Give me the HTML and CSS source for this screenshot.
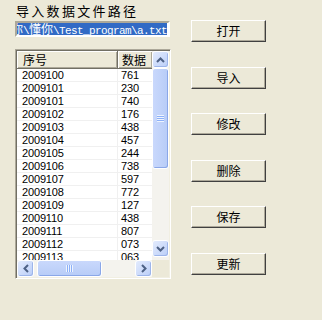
FILE: index.html
```html
<!DOCTYPE html>
<html lang="zh-CN">
<head>
    <meta charset="UTF-8">
    <title>导入数据</title>
    <link rel="stylesheet" href="styles.css">
</head>
<body>
    <div class="window">
        <div class="left">
            <div class="label">导入数据文件路径</div>
            <div class="path">
                <span class="sel">D:\<span class="cjk">我爱你</span>\<span class="cjk">懂你</span>\Test_program\a.txt</span>
            </div>
            <div class="list">
                <div class="list-main">
                    <div class="list-body">
                        <div class="head"><div class="c1">序号</div><div class="c2">数据</div></div>
                        <div class="row"><div class="c1">2009100</div><div class="c2">761</div></div>
                        <div class="row"><div class="c1">2009101</div><div class="c2">230</div></div>
                        <div class="row"><div class="c1">2009101</div><div class="c2">740</div></div>
                        <div class="row"><div class="c1">2009102</div><div class="c2">176</div></div>
                        <div class="row"><div class="c1">2009103</div><div class="c2">438</div></div>
                        <div class="row"><div class="c1">2009104</div><div class="c2">457</div></div>
                        <div class="row"><div class="c1">2009105</div><div class="c2">244</div></div>
                        <div class="row"><div class="c1">2009106</div><div class="c2">738</div></div>
                        <div class="row"><div class="c1">2009107</div><div class="c2">597</div></div>
                        <div class="row"><div class="c1">2009108</div><div class="c2">772</div></div>
                        <div class="row"><div class="c1">2009109</div><div class="c2">127</div></div>
                        <div class="row"><div class="c1">2009110</div><div class="c2">438</div></div>
                        <div class="row"><div class="c1">2009111</div><div class="c2">807</div></div>
                        <div class="row"><div class="c1">2009112</div><div class="c2">073</div></div>
                        <div class="row"><div class="c1">2009113</div><div class="c2">063</div></div>
                    </div>
                    <div class="vscroll">
                        <div class="sb-btn">
                            <svg width="9" height="6" viewBox="0 0 9 6"><path d="M1 5 L4.5 1.5 L8 5" fill="none" stroke="#4d6185" stroke-width="2"/></svg>
                        </div>
                        <div class="thumb v-thumb"><div class="grip v-grip"></div></div>
                        <div class="track"></div>
                        <div class="sb-btn">
                            <svg width="9" height="6" viewBox="0 0 9 6"><path d="M1 1 L4.5 4.5 L8 1" fill="none" stroke="#4d6185" stroke-width="2"/></svg>
                        </div>
                        <div class="v-end"></div>
                    </div>
                </div>
                <div class="list-foot">
                    <div class="hscroll">
                        <div class="sb-btn">
                            <svg width="6" height="9" viewBox="0 0 6 9"><path d="M5 1 L1.5 4.5 L5 8" fill="none" stroke="#4d6185" stroke-width="2"/></svg>
                        </div>
                        <div class="track h-gap"></div>
                        <div class="thumb h-thumb"><div class="grip h-grip"></div></div>
                        <div class="track"></div>
                        <div class="sb-btn">
                            <svg width="6" height="9" viewBox="0 0 6 9"><path d="M1 1 L4.5 4.5 L1 8" fill="none" stroke="#4d6185" stroke-width="2"/></svg>
                        </div>
                    </div>
                    <div class="corner"></div>
                </div>
            </div>
        </div>

        <div class="buttons">
            <button class="btn">打开</button>
            <button class="btn">导入</button>
            <button class="btn">修改</button>
            <button class="btn">删除</button>
            <button class="btn">保存</button>
            <button class="btn">更新</button>
        </div>
    </div>
</body>
</html>
```

FILE: styles.css
```css
body {
    margin: 0;
    background: #ece9d8;
    font-family: "Noto Sans CJK SC", sans-serif;
    color: #000;
}

.window {
    display: flex;
    width: 322px;
    height: 320px;
    padding-left: 15px;
    box-sizing: border-box;
}

.left {
    width: 156px;
    padding-top: 2px;
}

.label {
    height: 17px;
    line-height: 17px;
    font-size: 13px;
    letter-spacing: 2.3px;
    margin-left: 1px;
    white-space: nowrap;
}

/* sunken edit box */
.path {
    margin-top: 2px;
    width: 155px;
    height: 16px;
    box-sizing: border-box;
    border: 2px solid;
    border-color: #aca899 #fff #fff #aca899;
    background: #fff;
    display: flex;
    justify-content: flex-end;
    overflow: hidden;
    padding-right: 1px;
}

.sel {
    flex-shrink: 0;
    background: #316ac5;
    color: #fff;
    height: 12px;
    line-height: 12px;
    font-family: "Liberation Mono", monospace;
    font-size: 11px;
    letter-spacing: -0.6px;
    white-space: nowrap;
}

.cjk {
    font-family: "Noto Sans CJK SC", sans-serif;
    font-size: 12px;
    letter-spacing: 0;
}

.list {
    margin-top: 12px;
    width: 156px;
    height: 230px;
    box-sizing: border-box;
    border: 1px solid;
    border-color: #aca899 #fff #fff #aca899;
    box-shadow: inset 1px 1px 0 #716f64, inset -1px -1px 0 #f1efe2;
    padding: 1px;
    display: flex;
    flex-direction: column;
}

.list-main {
    display: flex;
    height: 209px;
}

.list-body {
    flex: 1;
    background: #fff;
    overflow: hidden;
}

.head {
    display: flex;
    height: 18px;
    line-height: 17px;
    font-size: 12px;
    background: #ece9d8;
}

.head .c1,
.head .c2 {
    box-sizing: border-box;
    border-right: 1px solid #716f64;
    border-bottom: 1px solid #716f64;
    box-shadow: inset 1px 1px 0 #fff, inset -1px -1px 0 #aca899;
}

.head .c1 { padding-left: 6px; }
.head .c2 { padding-left: 4px; border-right: none; }

.c1 {
    width: 101px;
    flex-shrink: 0;
    padding-left: 5px;
    box-sizing: border-box;
}

.c2 {
    flex: 1;
    padding-left: 3px;
}

.row {
    display: flex;
    height: 13px;
    line-height: 13px;
    font-family: "Liberation Sans", sans-serif;
    font-size: 11px;
    letter-spacing: -0.15px;
    box-sizing: border-box;
    border-bottom: 1px solid #f0f0f0;
}

.row .c1 {
    border-right: 1px solid #f0f0f0;
}

/* scrollbars */
.vscroll {
    width: 17px;
    display: flex;
    flex-direction: column;
    background: #f4f3ee;
}

.v-end {
    height: 3px;
}

.list-foot {
    display: flex;
    height: 17px;
}

.hscroll {
    flex: 1;
    display: flex;
    background: #f4f3ee;
}

.corner {
    width: 17px;
    background: #ece9d8;
}

.track {
    flex: 1;
}

.sb-btn {
    width: 17px;
    height: 17px;
    box-sizing: border-box;
    border: 1px solid #fff;
    border-radius: 3px;
    background: linear-gradient(135deg, #e3ebfd, #bacef8);
    box-shadow: inset -1px -1px 0 #9db5ea;
    display: flex;
    align-items: center;
    justify-content: center;
}

.thumb {
    box-sizing: border-box;
    border: 1px solid #fff;
    border-radius: 3px;
    background: linear-gradient(90deg, #c9d8fc, #b7ccf7);
    box-shadow: inset -1px -1px 0 #8aa7e8;
    display: flex;
    align-items: center;
    justify-content: center;
}

.v-thumb {
    height: 101px;
}

.h-thumb {
    width: 65px;
    background: linear-gradient(180deg, #c9d8fc, #b7ccf7);
}

.h-gap {
    flex: none;
    width: 3px;
}

.v-grip {
    width: 7px;
    height: 7px;
    background: repeating-linear-gradient(180deg, #eef4fe 0 1px, #8cb0f8 1px 2px);
}

.h-grip {
    width: 7px;
    height: 7px;
    background: repeating-linear-gradient(90deg, #eef4fe 0 1px, #8cb0f8 1px 2px);
}

/* push buttons */
.buttons {
    margin-left: 20px;
    padding-top: 20px;
    display: flex;
    flex-direction: column;
    gap: 24.6px;
}

.btn {
    width: 75px;
    height: 22px;
    margin: 0;
    padding: 0;
    background: #ece9d8;
    border: 1px solid;
    border-color: #fff #404040 #404040 #fff;
    box-shadow: inset -1px -1px 0 #aca899;
    font-family: "Noto Sans CJK SC", sans-serif;
    font-size: 12px;
    line-height: 18px;
    color: #000;
}
```
